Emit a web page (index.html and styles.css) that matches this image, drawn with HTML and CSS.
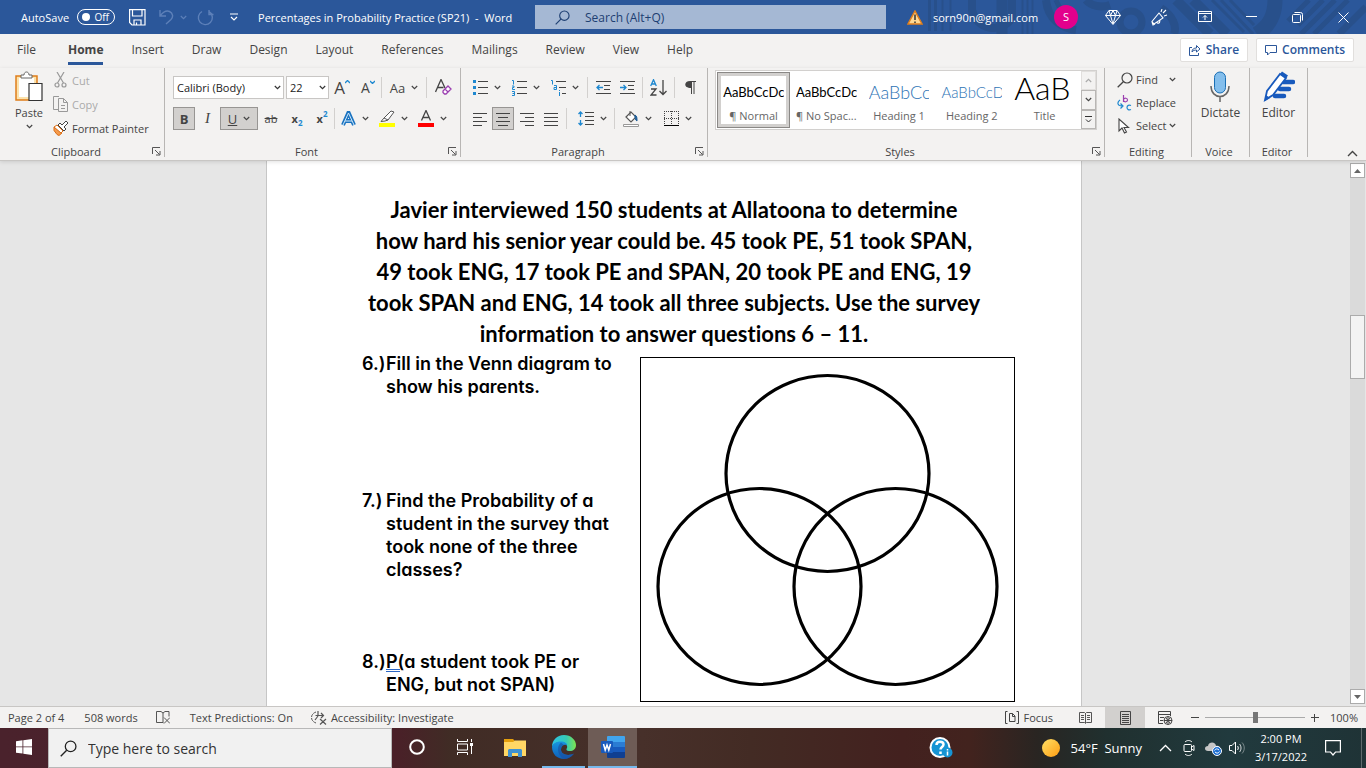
FILE: index.html
```html
<!DOCTYPE html>
<html lang="en">
<head>
    <meta charset="UTF-8">
    <meta name="viewport" content="width=device-width, initial-scale=1.0">
    <title>Percentages in Probability Practice (SP21) - Word</title>
    <link rel="stylesheet" href="styles.css">
</head>
<body>
    <!-- shared symbols -->
    <svg class="sprite" width="0" height="0">
        <symbol id="chev" viewBox="0 0 7 5"><path d="M.8 1l2.700 2.600L6.200 1" fill="none" stroke="currentColor" stroke-width="1.200"/></symbol>
        <symbol id="launch" viewBox="0 0 9 9"><path d="M.5 7V.500H8M3 3l4.500 4.500M8 4v4H4" fill="none" stroke="#555"/></symbol>
        <symbol id="lens" viewBox="0 0 16 16"><circle cx="10" cy="6" r="5" fill="none" stroke="currentColor" stroke-width="1.200"/><path d="M6.300 9.700L.7 15.300" fill="none" stroke="currentColor" stroke-width="1.300"/></symbol>
    </svg>

    <header class="titlebar">
        <svg class="pattern" width="480" height="34" viewBox="0 0 480 34" fill="none" stroke="#28508b">
            <path d="M43.500 0v31M49.500 0v31" stroke-width="3"/>
            <path d="M56.500 0v31M64.500 0v31" stroke-width="2"/>
            <path d="M86 0v10a22 22 0 0 0 40 8V0" stroke-width="8"/>
            <path d="M116 0v34" stroke-width="11"/>
            <path d="M136.500 0v34M141.500 0v34M146.500 0v34" stroke-width="2"/>
            <path d="M160 0c2 20 16 28 30 30" stroke-width="8"/>
            <path d="M170 0c3 9 8 13 15 15" stroke-width="5"/>
            <circle cx="245" cy="22" r="11" stroke-width="7"/>
            <path d="M200 0c5 6 15 8 24 5M275 8c12 8 16 18 13 26" stroke-width="8"/>
            <path d="M290 0l34 34M307 0l34 34" stroke-width="10"/>
            <path d="M326 0l32 32M335 0l32 34M344 0l24 25" stroke-width="3"/>
            <path d="M389 0c0 16-6 26-18 34" stroke-width="15"/>
            <path d="M402 21l21-21M412 25l25-25M415 34l34-34M428 34l34-34" stroke-width="5"/>
            <path d="M453 34l27-27" stroke-width="7"/>
        </svg>
        <div class="title-left">
            <label class="autosave">AutoSave <input type="checkbox" class="switch"><span class="switch-face"><i></i>Off</span></label>
            <button class="plain save" aria-label="Save"><svg width="17" height="17" viewBox="0 0 17 17" fill="none" stroke="#fff" stroke-width="1.200"><path d="M.6.600h15.400v15.400H3L.6 13.500zM3.500.600v6.400h9.500V.600M5 16v-5h7v5M7.500 16v-2.500"/></svg></button>
            <button class="plain undo" aria-label="Undo"><svg width="15" height="16" viewBox="0 0 15 16" fill="none" stroke="#5d80b9" stroke-width="1.400"><path d="M1 1v6h6M1.500 6.500C5 2 8 1.500 10.500 2.500 14 4 14.500 8 12 10.500L7 15"/></svg><svg class="chev faded"><use href="#chev"/></svg></button>
            <button class="plain redo" aria-label="Redo"><svg width="17" height="17" viewBox="0 0 17 17" fill="none" stroke="#5d80b9" stroke-width="1.400"><path d="M12 1v4.500h4.500M5 2.500a7 7 0 1 0 7.500.500l3 2.500"/></svg></button>
            <button class="plain" aria-label="Customize toolbar"><svg width="8" height="8" viewBox="0 0 8 8" fill="none" stroke="#fff" stroke-width="1.200"><path d="M0 1h8M1 4l3 3 3-3"/></svg></button>
            <span class="doc-title">Percentages in Probability Practice (SP21)&nbsp; -&nbsp; Word</span>
        </div>
        <label class="title-search"><svg width="15" height="15"><use href="#lens"/></svg><input type="text" placeholder="Search (Alt+Q)" aria-label="Search"></label>
        <div class="title-right">
            <svg width="16" height="15" viewBox="0 0 16 15"><path d="M8 1l7 13H1z" fill="#ffd994" stroke="#e07f1c" stroke-width="1.500"/><path d="M8 4.500v5.500M8 11.500v1.500" stroke="#333" stroke-width="1.500"/></svg>
            <span class="account">sorn90n@gmail.com</span>
            <span class="avatar">S</span>
            <button class="plain win gem" aria-label="Premium"><svg width="16" height="15" viewBox="0 0 16 15" fill="none" stroke="#fff"><path d="M4 .500h8l3.500 5L8 14.500.500 5.500zM.5 5.500h15M4 .500l1.500 5L8 14l2.500-8.500L12 .500M5.500 5.500L8 .500l2.500 5"/></svg></button>
            <button class="plain win" aria-label="What's new"><svg width="17" height="17" viewBox="0 0 17 17" fill="none" stroke="#fff" stroke-width="1.100"><path d="M8 4l4 5-9 6-2-2.500zM1 13l1 3 2-1M6 13c0 2 3 2 3-2M10 3l1-3M12 4l3-3M13 7l3-1"/></svg></button>
            <button class="plain win" aria-label="Ribbon display options"><svg width="14" height="12" viewBox="0 0 14 12" fill="none" stroke="#fff"><path d="M.5.500h13v10H.5zM.5 2.500h13M7 9V4.500M5 6.500l2-2 2 2"/></svg></button>
            <button class="plain win" aria-label="Minimize"><svg width="11" height="11" viewBox="0 0 11 11"><path d="M0 4.500h11" stroke="#fff"/></svg></button>
            <button class="plain win" aria-label="Restore"><svg width="11" height="11" viewBox="0 0 11 11" fill="none" stroke="#fff"><rect x=".5" y="2.500" width="8" height="8" rx="1"/><path d="M2.500.500h6a2 2 0 0 1 2 2v6"/></svg></button>
            <button class="plain win" aria-label="Close"><svg width="11" height="11" viewBox="0 0 11 11" stroke="#fff"><path d="M.5.500l10 10M10.500.500l-10 10"/></svg></button>
        </div>
    </header>

    <nav class="tabs">
        <a href="#" class="file">File</a>
        <a href="#" class="active">Home</a>
        <a href="#">Insert</a>
        <a href="#">Draw</a>
        <a href="#">Design</a>
        <a href="#">Layout</a>
        <a href="#">References</a>
        <a href="#">Mailings</a>
        <a href="#">Review</a>
        <a href="#">View</a>
        <a href="#">Help</a>
        <div class="tab-actions">
            <button class="action"><svg width="12" height="12" viewBox="0 0 12 12" fill="none" stroke="#2b579a"><path d="M3 3.500H.5v8h9V9M3 8c0-3 2-4 4.500-4V1.500L11 5 7.500 8V6C5.500 6 4 6.500 3 8z"/></svg>Share</button>
            <button class="action"><svg width="12" height="12" viewBox="0 0 12 12" fill="none" stroke="#2b579a"><path d="M.5 1.500h11v7H5l-2.500 2.500V8.500h-2z"/></svg>Comments</button>
        </div>
    </nav>

    <section class="ribbon">
        <div class="group clipboard">
            <div class="tools clip-tools">
                <button class="plain big"><svg width="28" height="31" viewBox="0 0 28 31"><path d="M1 5h21v24H1z" fill="#fbe3ad" stroke="#e07d1a" stroke-width="1.500"/><path d="M4 7h15v19H4z" fill="#fff"/><path d="M6 7V4h3c0-4 5-4 5 0h3v3z" fill="#fff" stroke="#666"/><path d="M14 12.500h13v17H14z" fill="#fff" stroke="#333" stroke-width="1.200"/></svg>Paste<svg class="chev"><use href="#chev"/></svg></button>
                <div class="stack">
                    <button class="plain item off"><svg width="16" height="16" viewBox="0 0 16 16" fill="none" stroke="#999" stroke-width="1.200"><path d="M4 0l6.500 11M11 0L4.500 11"/><circle cx="4" cy="13" r="2"/><circle cx="11" cy="13" r="2"/></svg>Cut</button>
                    <button class="plain item off"><svg width="16" height="16" viewBox="0 0 16 16" fill="none" stroke="#999"><path d="M5 13.500H.5V.500H6M5.500 2.500h5l4 4v9h-9zM10.500 2.500v4h4M8 9.500h4M8 12.500h4"/></svg>Copy</button>
                    <button class="plain item"><svg width="16" height="16" viewBox="0 0 16 16"><path d="M1 7l8 6-3 2.500-2-1-3-4z" fill="#f59b4c" stroke="#d96d16"/><path d="M1 7l3-2 6 6-2 2z" fill="#fff" stroke="#d96d16"/><path d="M5 5l2-2 2 2 4-4 2 2-4 4 2 2-2 2z" fill="#fff" stroke="#444"/></svg>Format Painter</button>
                </div>
            </div>
            <div class="caption"><span>Clipboard</span><svg class="launch"><use href="#launch"/></svg></div>
        </div>

        <div class="group font">
            <div class="tools rows">
                <div class="row">
                    <select class="family" aria-label="Font"><option>Calibri (Body)</option></select>
                    <select class="size" aria-label="Font size"><option>22</option></select>
                    <button class="plain w26" aria-label="Grow font"><span class="glyph g18">A</span><svg class="hint" width="5" height="4" viewBox="0 0 5 4"><path d="M0 3l2.500-2.500L5 3" fill="none" stroke="#1e88d0" stroke-width="1.300"/></svg></button>
                    <button class="plain w26" aria-label="Shrink font"><span class="glyph g14">A</span><svg class="hint" width="5" height="4" viewBox="0 0 5 4"><path d="M0 1l2.500 2.500L5 1" fill="none" stroke="#1e88d0" stroke-width="1.300"/></svg></button>
                    <span class="sep"></span>
                    <button class="plain w44" aria-label="Change case"><span class="glyph g13">Aa</span><svg class="chev"><use href="#chev"/></svg></button>
                    <span class="sep"></span>
                    <button class="plain w32" aria-label="Clear formatting"><svg width="17" height="17" viewBox="0 0 17 17" fill="none"><path d="M.5 13L6 .500 10 9M2.500 8.500h6" stroke="#444" stroke-width="1.300"/><path d="M8 12l5-5 3 3-5 5H9.500L8 13.500zM10 10l3 3" fill="#fff" stroke="#9b3fb0" stroke-width="1.300"/></svg></button>
                </div>
                <div class="row">
                    <button class="plain w22 pressed"><b class="g13">B</b></button>
                    <button class="plain w25"><i class="italic">I</i></button>
                    <button class="plain w38 pressed" aria-label="Underline"><u class="g13">U</u><svg class="chev"><use href="#chev"/></svg></button>
                    <button class="plain w26"><s>ab</s></button>
                    <button class="plain w26" aria-label="Subscript"><b>x</b><sub>2</sub></button>
                    <button class="plain w24" aria-label="Superscript"><b>x</b><sup>2</sup></button>
                    <span class="sep"></span>
                    <button class="plain w39" aria-label="Text effects"><svg width="15" height="16" viewBox="0 0 15 16" fill="none" stroke-linejoin="round"><path d="M2 14L7.500 1.500 13 14M4 10h7" stroke="#1a73c0" stroke-width="4"/><path d="M2 14L7.500 2 13 14M4 10h7" stroke="#cfe8fa" stroke-width="1"/></svg><svg class="chev"><use href="#chev"/></svg></button>
                    <button class="plain w39" aria-label="Highlight"><svg width="16" height="17" viewBox="0 0 16 17"><path d="M5 8l7-7 3 1-6 8-3 1-4 .500L5 8zM5 8l4 2" fill="#fff" stroke="#555"/><path d="M0 13h16v4H0z" fill="#ff0"/></svg><svg class="chev"><use href="#chev"/></svg></button>
                    <button class="plain w39" aria-label="Font color"><svg width="16" height="17" viewBox="0 0 16 17"><path d="M3.500 10.500L8 .500l4.500 10M5 7.500h6" fill="none" stroke="#444" stroke-width="1.300"/><path d="M0 13h16v4H0z" fill="#f00"/></svg><svg class="chev"><use href="#chev"/></svg></button>
                </div>
            </div>
            <div class="caption"><span>Font</span><svg class="launch"><use href="#launch"/></svg></div>
        </div>

        <div class="group paragraph">
            <div class="tools rows">
                <div class="row">
                    <button class="plain w39" aria-label="Bullets"><svg width="15" height="15" viewBox="0 0 15 15"><path d="M0 0h3v3H0zM0 6h3v3H0zM0 12h3v3H0z" fill="#1e88d0"/><path d="M5 1.500h10M5 7.500h10M5 13.500h10" stroke="#444"/></svg><svg class="chev"><use href="#chev"/></svg></button>
                    <button class="plain w39" aria-label="Numbering"><svg width="15" height="16" viewBox="0 0 15 16" fill="none"><path d="M0 .500h1.500v4M0 6h2v1.500H.5V9.500H3M0 11.500h2.500v4H0M.5 13.500h2" stroke="#1e88d0"/><path d="M5 1.500h10M5 7.500h10M5 13.500h10" stroke="#444"/></svg><svg class="chev"><use href="#chev"/></svg></button>
                    <button class="plain w39" aria-label="Multilevel list"><svg width="15" height="16" viewBox="0 0 15 16" fill="none"><path d="M0 .500h1.500v4M3 5.500h2.500v4H3V7.500h2.500M8.500 10v1M8.500 12v4" stroke="#1e88d0"/><path d="M5 1.500h10M8 7.500h7M11 13.500h4" stroke="#444"/></svg><svg class="chev"><use href="#chev"/></svg></button>
                    <span class="sep wide"></span>
                    <button class="plain w24" aria-label="Decrease indent"><svg width="15" height="14" viewBox="0 0 15 14" fill="none"><path d="M0 .500h15M8 4.500h6M8 8.500h6M0 12.500h15" stroke="#444"/><path d="M7 6.500H1M3.500 4L1 6.500 3.500 9" stroke="#1e88d0" stroke-width="1.300"/></svg></button>
                    <button class="plain w24" aria-label="Increase indent"><svg width="15" height="14" viewBox="0 0 15 14" fill="none"><path d="M0 .500h15M8 4.500h6M8 8.500h6M0 12.500h15" stroke="#444"/><path d="M0 6.500h6M3.500 4L6 6.500 3.500 9" stroke="#1e88d0" stroke-width="1.300"/></svg></button>
                    <span class="sep wide"></span>
                    <button class="plain w25" aria-label="Sort"><svg width="17" height="17" viewBox="0 0 17 17" fill="none" stroke-width="1.300"><path d="M.7 7L3.500.700 6.300 7M1.500 5h4" stroke="#1e88d0"/><path d="M1 10h5l-5 6h5.500M13 1v14.500M9.500 12l3.500 3.500 3.500-3.500" stroke="#444"/></svg></button>
                    <span class="sep wide"></span>
                    <button class="plain w25" aria-label="Show marks"><svg width="11" height="13" viewBox="0 0 11 13"><path d="M5 0h6v1H9.500v12h-1V1H7v12H6V7C-2 7-1 0 5 0z" fill="#444"/></svg></button>
                </div>
                <div class="row">
                    <button class="plain w25" aria-label="Align left"><svg width="14" height="14" viewBox="0 0 14 14"><path d="M0 1.500h14M0 5.500h9M0 9.500h14M0 13.500h9" stroke="#444"/></svg></button>
                    <button class="plain w22 pressed" aria-label="Center"><svg width="14" height="14" viewBox="0 0 14 14"><path d="M0 1.500h14M2 5.500h10M0 9.500h14M2 13.500h10" stroke="#444"/></svg></button>
                    <button class="plain w25" aria-label="Align right"><svg width="14" height="14" viewBox="0 0 14 14"><path d="M0 1.500h14M5 5.500h9M0 9.500h14M5 13.500h9" stroke="#444"/></svg></button>
                    <button class="plain w24" aria-label="Justify"><svg width="14" height="14" viewBox="0 0 14 14"><path d="M0 1.500h14M0 5.500h14M0 9.500h14M0 13.500h14" stroke="#444"/></svg></button>
                    <span class="sep wide"></span>
                    <button class="plain w44" aria-label="Line spacing"><svg width="16" height="15" viewBox="0 0 16 15" fill="none"><path d="M2.500 1v5M.5 3l2-2 2 2M2.500 9v5M.5 12l2 2 2-2" stroke="#1e88d0" stroke-width="1.300"/><path d="M7 1.500h9M7 5.500h9M7 9.500h9M7 13.500h9" stroke="#444"/></svg><svg class="chev"><use href="#chev"/></svg></button>
                    <span class="sep"></span>
                    <button class="plain w44" aria-label="Shading"><svg width="16" height="16" viewBox="0 0 16 16"><path d="M3 6l5-5 5 5-5 5z" fill="#fff" stroke="#555" stroke-width="1.200"/><path d="M7 0v5" stroke="#555"/><path d="M12 4c2 1 2 3 2 6-2-1-2-3-2-6z" fill="#1e5f9a" stroke="#1e5f9a"/><path d="M.5 13.500h15v2H.5z" fill="#fff" stroke="#999"/></svg><svg class="chev"><use href="#chev"/></svg></button>
                    <button class="plain w38" aria-label="Borders"><svg width="15" height="15" viewBox="0 0 15 15" stroke="#444"><path d="M0 .500h15M0 7.500h15M.5 0v14M7.500 0v14M14.500 0v14" stroke-dasharray="1 1"/><path d="M0 14.500h15" stroke="#000"/></svg><svg class="chev"><use href="#chev"/></svg></button>
                </div>
            </div>
            <div class="caption"><span>Paragraph</span><svg class="launch"><use href="#launch"/></svg></div>
        </div>

        <div class="group styles">
            <div class="tools">
                <div class="gallery">
                    <button class="style selected"><span class="sample">AaBbCcDc</span><span>¶ Normal</span></button>
                    <button class="style"><span class="sample">AaBbCcDc</span><span>¶ No Spac...</span></button>
                    <button class="style"><span class="sample h1-sample">AaBbCc</span><span>Heading 1</span></button>
                    <button class="style"><span class="sample h2-sample">AaBbCcD</span><span>Heading 2</span></button>
                    <button class="style"><span class="sample title-sample">AaB</span><span>Title</span></button>
                    <div class="gallery-nav">
                        <button class="dim" aria-label="Previous styles"><svg class="chev flip"><use href="#chev"/></svg></button>
                        <button aria-label="Next styles"><svg class="chev"><use href="#chev"/></svg></button>
                        <button aria-label="More styles"><svg width="7" height="7" viewBox="0 0 7 7" fill="none" stroke="#333"><path d="M0 .500h7M1 3.500L3.500 6 6 3.500"/></svg></button>
                    </div>
                </div>
            </div>
            <div class="caption"><span>Styles</span><svg class="launch"><use href="#launch"/></svg></div>
        </div>

        <div class="group editing">
            <div class="tools">
                <div class="stack">
                    <button class="plain item"><svg width="16" height="16"><use href="#lens"/></svg>Find<svg class="chev gap"><use href="#chev"/></svg></button>
                    <button class="plain item"><svg width="16" height="16" viewBox="0 0 16 16" fill="none" stroke-width="1.200"><path d="M6.500 0v7M6.500 4.500c1-2 4-1.500 4 .500s-3 2.500-4 .500" stroke="#9b3fb0"/><path d="M14 10.500c-2-1-4 0-4 2s2 3 4 2M3 5C0 7 0 11 5 11M3.500 8.500L6 11l-2.500 2.500" stroke="#1e88d0"/></svg>Replace</button>
                    <button class="plain item"><svg width="16" height="16" viewBox="0 0 16 16"><path d="M2 1v12l3-3 2.500 5 2-1L7 9.500h4.500z" fill="#fff" stroke="#444" stroke-width="1.100"/></svg>Select<svg class="chev"><use href="#chev"/></svg></button>
                </div>
            </div>
            <div class="caption"><span>Editing</span></div>
        </div>

        <div class="group single">
            <div class="tools">
                <button class="plain big"><svg width="20" height="31" viewBox="0 0 20 31" fill="none"><rect x="4.500" y="1" width="11" height="21" rx="5.500" fill="#83beec" stroke="#1a6fb5"/><path d="M1 15c0 14 18 14 18 0M10 25.500V31" stroke="#666" stroke-width="1.500"/></svg>Dictate</button>
            </div>
            <div class="caption"><span>Voice</span></div>
        </div>

        <div class="group single">
            <div class="tools">
                <button class="plain big"><svg width="32" height="31" viewBox="0 0 32 31"><path d="M20 11h10M17 18h9M12 25h9" stroke="#185abd" stroke-width="4.500" stroke-linecap="round"/><path d="M2 29l2-9L17 3l6 4-13 17z" fill="#fff" stroke="#185abd" stroke-width="1.800"/><path d="M17 3l2-2.500 6 4L22.500 8zM2 30l1-6 4 3z" fill="#185abd"/></svg>Editor</button>
            </div>
            <div class="caption"><span>Editor</span></div>
        </div>
        <button class="plain collapse" aria-label="Collapse the ribbon"><svg width="11" height="7" viewBox="0 0 11 7"><path d="M1 6l4.500-4.500L10 6" fill="none" stroke="#444" stroke-width="1.400"/></svg></button>
    </section>

    <main class="workspace">
        <div class="canvas">
            <article class="page">
                <h1>Javier interviewed 150 students at Allatoona to determine<br>how hard his senior year could be. 45 took PE, 51 took SPAN,<br>49 took ENG, 17 took PE and SPAN, 20 took PE and ENG, 19<br>took SPAN and ENG, 14 took all three subjects. Use the survey<br>information to answer questions 6 – 11.</h1>
                <div class="exercise">
                    <div class="questions">
                        <p class="q6"><span>6.)</span><span>Fill in the Venn diagram to<br>show his parents.</span></p>
                        <p class="q7"><span>7.)</span><span>Find the Probability of a<br>student in the survey that<br>took none of the three<br>classes?</span></p>
                        <p><span>8.)</span><span><span class="grammar">P(</span>a student took PE or<br>ENG, but not SPAN)</span></p>
                    </div>
                    <svg class="venn" width="375" height="345" viewBox="0 0 375 345" fill="none" stroke="#000">
                        <rect x=".5" y=".5" width="374" height="344"/>
                        <g stroke-width="3.200">
                            <ellipse cx="187.500" cy="116.500" rx="101.500" ry="98"/>
                            <ellipse cx="119.500" cy="229.500" rx="101.500" ry="98"/>
                            <ellipse cx="255.500" cy="229.500" rx="101.500" ry="98"/>
                        </g>
                    </svg>
                </div>
            </article>
        </div>
        <div class="scrollbar">
            <button aria-label="Scroll up"><svg width="7" height="4" viewBox="0 0 7 4"><path d="M0 4L3.500 0 7 4z" fill="#666"/></svg></button>
            <div class="track"><div class="thumb"></div></div>
            <button aria-label="Scroll down"><svg width="7" height="4" viewBox="0 0 7 4"><path d="M0 0l3.500 4L7 0z" fill="#666"/></svg></button>
        </div>
    </main>

    <div class="statusbar">
        <span class="pages">Page 2 of 4</span>
        <span class="words">508 words</span>
        <svg class="proof" width="14" height="13" viewBox="0 0 14 13" fill="none" stroke="#555"><path d="M7 11.500H.5V.500H5l2 1.500v10M7 2L9 .500h4v5M8 6.500l6 6M14 6.500l-6 6"/></svg>
        <span class="predictions">Text Predictions: On</span>
        <svg width="16" height="14" viewBox="0 0 16 14" fill="none" stroke="#555"><path d="M5 1C-1 3-1 10 5 12" stroke-dasharray="3 1"/><path d="M7 0v5M4.500 4.500H12M10 2l2.500 2.500L10 7M9 8l6 5.500M15 8l-6 5.500M7 5l-3 4" stroke-width="1.200"/></svg>
        <span class="access">Accessibility: Investigate</span>
        <div class="views">
            <button class="plain focus"><svg width="14" height="13" viewBox="0 0 14 13" fill="none" stroke="#444"><path d="M2.500.500h-2v12h2M11.500.500h2v12h-2M4.500 2.500h3l2.500 2.500v5.500H4.500zM7.500 2.500v3H10"/></svg>Focus</button>
            <button class="plain view" aria-label="Read mode"><svg width="13" height="12" viewBox="0 0 13 12" fill="none" stroke="#555"><path d="M.5.500h5l1 1 1-1h5v10h-5l-1 1-1-1h-5zM6.500 1v10M2 3.500h3M2 5.500h3M2 7.500h3M8 3.500h3M8 5.500h3M8 7.500h3"/></svg></button>
            <button class="plain view on" aria-label="Print layout"><svg width="11" height="14" viewBox="0 0 11 14" fill="none" stroke="#444"><path d="M.5.500h10v13H.5zM2 3.500h7M2 5.500h7M2 7.500h7M2 9.500h7M2 11.500h7"/></svg></button>
            <button class="plain view" aria-label="Web layout"><svg width="15" height="14" viewBox="0 0 15 14" fill="none" stroke="#444"><path d="M5 12.500H.5V.500h12V5M.5 3.500h12M2 6.500h4M2 9.500h3"/><circle cx="10" cy="9.500" r="4"/><path d="M6 9.500h8M10 5.500v8M8 7l4 5M12 7l-4 5"/></svg></button>
            <button class="plain zoom-step" aria-label="Zoom out"><svg width="8" height="8" viewBox="0 0 8 8"><path d="M0 3.500h8" stroke="#444"/></svg></button>
            <input type="range" class="zoom" min="0" max="100" value="50" aria-label="Zoom">
            <button class="plain zoom-step" aria-label="Zoom in"><svg width="8" height="8" viewBox="0 0 8 8"><path d="M0 3.500h8M3.500 0v8" stroke="#444"/></svg></button>
            <span class="percent">100%</span>
        </div>
    </div>

    <footer class="taskbar">
        <button class="plain task" aria-label="Start"><svg width="16" height="16" viewBox="0 0 16 16" fill="#fff"><path d="M0 2.200l6.500-.9v6.200H0zM7.300 1.200L16 0v7.500H7.300zM0 8.300h6.500v6.200L0 13.700zM7.300 8.300H16V16l-8.700-1.200z"/></svg></button>
        <label class="task-search"><svg width="17" height="17"><use href="#lens"/></svg><input type="text" placeholder="Type here to search" aria-label="Type here to search"></label>
        <button class="plain task" aria-label="Cortana"><svg width="16" height="16" viewBox="0 0 16 16"><circle cx="8" cy="8" r="6.800" fill="none" stroke="#fff" stroke-width="2"/></svg></button>
        <button class="plain task" aria-label="Task view"><svg width="17" height="16" viewBox="0 0 17 16" fill="none" stroke="#fff"><path d="M.5 0v2.500h10V0M.5 16v-2.500h10V16M.5 5h10v6H.5zM14.500 0v3M14.500 7v8"/><path d="M13 4h3v3h-3z" fill="#fff" stroke="none"/></svg></button>
        <button class="plain task" aria-label="File Explorer"><svg width="22" height="19" viewBox="0 0 22 19"><path d="M0 1h9l2 2h11v15H0z" fill="#e5a00d"/><path d="M0 4h9l2-1.500h11V18H0z" fill="#ffd765"/><path d="M4 19v-7l1-1h12l1 1v7h-4v-4H8v4z" fill="#3f92d2"/></svg></button>
        <button class="plain task running" aria-label="Edge"><svg width="24" height="24" viewBox="0 0 24 24">
            <defs>
                <linearGradient id="edgeTop"><stop offset="0" stop-color="#2cc3e6"/><stop offset=".6" stop-color="#36c9b4"/><stop offset="1" stop-color="#7de54f"/></linearGradient>
                <linearGradient id="edgeLow" x2="0" y2="1"><stop offset="0" stop-color="#1795e0"/><stop offset="1" stop-color="#0f5fb8"/></linearGradient>
            </defs>
            <path d="M0 12C0 5 5 0 12 0s12 5 12 10c0 4-3 6-6 6-4 0-4-1.500-3-3 1-3-2-6-6-6-4 0-8 2-9 5z" fill="url(#edgeTop)"/>
            <path d="M0 12c1-4 5-5.500 9-5.500 4 0 6 2 6 4-2-2-6 0-6 4 0 5 7 7 13 4-3 4-7 5.500-10 5.500C5 24 0 19 0 12z" fill="url(#edgeLow)"/>
            <path d="M9 7.500c-4 3-5 12 3 16.500 4 0 8-2 10-5.500-6 3-13 1-13-4 0-3 2-4 3-4.500z" fill="#1a4f9f" opacity=".6"/></svg></button>
        <button class="plain task running current" aria-label="Word"><svg width="24" height="22" viewBox="0 0 24 22"><path d="M6 1a1 1 0 0 1 1-1h16a1 1 0 0 1 1 1v5H6z" fill="#41a5ee"/><path d="M6 6h18v5H6z" fill="#2b7cd3"/><path d="M6 11h18v5H6z" fill="#185abd"/><path d="M6 16h18v5a1 1 0 0 1-1 1H7a1 1 0 0 1-1-1z" fill="#103f91"/><rect y="5" width="12" height="12" rx="1" fill="#185abd"/><path d="M2.500 8l1.700 6L6 9l1.800 5 1.700-6" fill="none" stroke="#fff" stroke-width="1.500"/></svg></button>
        <div class="tray">
            <button class="plain help" aria-label="Help"><svg width="24" height="22" viewBox="0 0 24 22"><circle cx="11" cy="10.500" r="9.500" fill="#1694d4" stroke="#fff" stroke-width="2"/><path d="M7.500 8c0-4.500 7-4 7-.500 0 2.500-3 2.500-3 5M11.500 14.500v2.500" fill="none" stroke="#fff" stroke-width="2.500"/><circle cx="18.500" cy="15.500" r="5" fill="#1694d4"/><path d="M18.500 12v1.500M18.500 14.500v4" stroke="#fff" stroke-width="1.500"/></svg></button>
            <button class="plain weather"><span class="sun"></span>54°F&nbsp; Sunny</button>
            <button class="plain tray-icon" aria-label="Hidden icons"><svg width="13" height="8" viewBox="0 0 13 8"><path d="M1 7l5.500-5.500L12 7" fill="none" stroke="#fff" stroke-width="1.300"/></svg></button>
            <button class="plain tray-icon" aria-label="Meet now"><svg width="12" height="16" viewBox="0 0 12 16" fill="none" stroke="#fff"><path d="M2 2c2-2 5-2 7 0M2 14c2 2 5 2 7 0"/><rect x="1" y="4.500" width="7.500" height="7" rx="1"/><path d="M8.500 7l2.500-1.500v5L8.500 9"/></svg></button>
            <button class="plain tray-icon" aria-label="OneDrive"><svg width="17" height="15" viewBox="0 0 17 15"><path d="M3 10C-1 10-1 5 3 5c1-5 8-4 8 0 3-1 5 2 4 5z" fill="#c6c6c6"/><circle cx="12" cy="10" r="4.500" fill="#1e6fd0" stroke="#fff"/><path d="M9.500 9.500c1-2 3-2 4.500-.5M14.500 10.500c-1 2-3 2-4.500.500" stroke="#fff" fill="none"/></svg></button>
            <button class="plain tray-icon" aria-label="Volume"><svg width="16" height="14" viewBox="0 0 16 14" fill="none" stroke="#fff"><path d="M.5 4.500H3L6.500 1v12L3 9.500H.5zM8.500 5c1 1 1 3 0 4"/><path d="M10.500 3c2 2 2 6 0 8" opacity=".8"/><path d="M13 1.500c3 3 3 8 0 11" opacity=".4"/></svg></button>
            <div class="clock"><span>2:00 PM</span><span>3/17/2022</span></div>
            <button class="plain notify" aria-label="Notifications"><svg width="16" height="16" viewBox="0 0 16 16" fill="none" stroke="#fff" stroke-width="1.200"><path d="M.6.600h14.800v11.400H10.500L8 15l-2.500-3H.6z"/></svg></button>
        </div>
    </footer>
</body>
</html>
```
FILE: styles.css
```css
* {
    box-sizing: border-box;
}

body {
    margin: 0;
    height: 100vh;
    display: flex;
    flex-direction: column;
    overflow: hidden;
    font-family: "Open Sans", "Noto Sans", sans-serif;
    font-size: 11px;
    color: #444;
    background-color: #f3f2f1;
}

button, input, select {
    font: inherit;
    color: inherit;
}

svg {
    flex: none;
}

.sprite {
    position: absolute;
}

.plain {
    border: none;
    background: none;
    padding: 0;
    display: flex;
    align-items: center;
    justify-content: center;
}

.chev {
    width: 7px;
    height: 5px;
}

.flip {
    transform: rotate(180deg);
}

/* title bar */
.titlebar {
    flex: none;
    position: relative;
    height: 34px;
    display: grid;
    grid-template-columns: 535px minmax(0, 1fr) 480px;
    align-items: center;
    background-color: #2b579a;
    color: #fff;
}

.pattern {
    position: absolute;
    right: 0;
    top: 0;
}

.title-left {
    display: flex;
    align-items: center;
    padding-left: 21px;
}

.autosave {
    display: flex;
    align-items: center;
    gap: 8px;
}

.switch {
    position: absolute;
    opacity: 0;
}

.switch-face {
    width: 38px;
    height: 16px;
    border: 1px solid #fff;
    border-radius: 8px;
    display: flex;
    align-items: center;
    justify-content: space-between;
    padding: 0 5px 0 4px;
    font-size: 10px;
}

.switch-face i {
    width: 8px;
    height: 8px;
    border-radius: 50%;
    background-color: #fff;
}

.save {
    margin-left: 14px;
}

.undo {
    margin-left: 13px;
    gap: 6px;
}

.faded {
    color: #5d80b9;
}

.redo {
    margin: 0 16px 0 10px;
}

.doc-title {
    margin-left: 20px;
    white-space: nowrap;
}

.title-search {
    height: 24px;
    display: flex;
    align-items: center;
    gap: 15px;
    padding-left: 20px;
    background-color: #a5b8d4;
    color: #1e3f72;
    font-size: 12px;
}

.title-search input,
.task-search input {
    flex: 1;
    min-width: 0;
    border: none;
    padding: 0;
    background: none;
    outline: none;
}

.title-search input::placeholder {
    color: #1e3f72;
}

.title-right {
    position: relative;
    display: flex;
    align-items: center;
    padding-left: 21px;
}

.account {
    margin-left: 10px;
    width: 110px;
}

.avatar {
    width: 24px;
    height: 24px;
    margin-left: 11px;
    border-radius: 50%;
    background-color: #e3008c;
    line-height: 24px;
    text-align: center;
}

.win {
    width: 46px;
    height: 34px;
}

.gem {
    margin-left: auto;
}

/* tabs */
.tabs {
    flex: none;
    height: 34px;
    display: flex;
    align-items: center;
    padding: 0 12px 0 17px;
    gap: 28px;
    font-size: 12px;
}

.tabs a {
    color: #444;
    text-decoration: none;
    line-height: 24px;
    border-bottom: 3px solid transparent;
}

.tabs .file {
    margin-right: 4px;
}

.tabs .active {
    font-weight: bold;
    border-color: #2b579a;
}

.tab-actions {
    margin-left: auto;
    margin-bottom: 3px;
    display: flex;
    gap: 8px;
}

.action {
    height: 24px;
    display: flex;
    align-items: center;
    gap: 5px;
    padding: 0 8px;
    background-color: #fff;
    border: 1px solid #e1dfdd;
    border-radius: 2px;
    color: #2b579a;
    font-weight: 600;
}

/* ribbon */
.ribbon {
    flex: none;
    position: relative;
    height: 93px;
    display: flex;
    border-bottom: 1px solid #c8c6c4;
    box-shadow: 0 1px 4px rgba(0, 0, 0, 0.12);
}

.group {
    flex: none;
    display: flex;
    flex-direction: column;
    border: 0 solid;
    border-right-width: 1px;
    border-image: linear-gradient(#b8b6b4 88px, transparent 88px) 1;
}

.clipboard { width: 165px; }
.font { width: 296px; }
.paragraph { width: 247px; }
.styles { flex: 1; min-width: 0; }
.editing { width: 87px; }
.single { width: 58px; }

.tools {
    flex: 1;
    display: flex;
    justify-content: center;
}

.caption {
    display: flex;
    align-items: center;
    height: 17px;
    padding-right: 3px;
}

.caption span {
    flex: 1;
    text-align: center;
}

.launch {
    width: 9px;
    height: 9px;
}

.clip-tools {
    justify-content: flex-start;
    padding-left: 10px;
    gap: 5px;
}

.big {
    flex-direction: column;
    justify-content: flex-start;
    gap: 3px;
    padding-top: 3px;
    min-width: 38px;
    font-size: 12px;
    line-height: 16px;
}

.clip-tools .big {
    font-size: 11px;
}

.stack {
    display: flex;
    flex-direction: column;
}

.item {
    justify-content: flex-start;
    gap: 3px;
    height: 24px;
}

.off {
    color: #aaa;
}

.gap {
    margin-left: 8px;
}

.rows {
    flex-direction: column;
    justify-content: flex-start;
    gap: 8px;
    padding: 8px 0 0 8px;
}

.paragraph .rows {
    padding-left: 6px;
}

.row {
    height: 23px;
    display: flex;
    align-items: center;
}

.row button {
    height: 23px;
}

.w22 { width: 22px; }
.w24 { width: 24px; }
.w25 { width: 25px; }
.w26 { width: 26px; }
.w32 { width: 32px; }

.w38,
.w39,
.w44 {
    gap: 6px;
}

.w38 { width: 38px; }
.w39 { width: 39px; }
.w44 { width: 44px; }

.pressed {
    background-color: #d2d0ce;
    border: 1px solid #979593;
}

.sep {
    width: 1px;
    height: 21px;
    background-color: #d2d0ce;
}

.wide {
    margin: 0 3px;
}

.row select {
    appearance: none;
    height: 23px;
    padding: 0 3px;
    border: 1px solid #c8c6c4;
    border-radius: 0;
    color: #222;
    background: #fff url("data:image/svg+xml,%3Csvg xmlns='http://www.w3.org/2000/svg' width='7' height='5'%3E%3Cpath d='M.8 1l2.700 2.600L6.200 1' fill='none' stroke='%23333' stroke-width='1.200'/%3E%3C/svg%3E") no-repeat right 2px center;
}

.family {
    width: 111px;
    margin-right: 2px;
}

.size {
    width: 43px;
}

.g18 { font-size: 17px; }
.g14 { font-size: 14px; }
.g13 { font-size: 13px; }

.hint {
    align-self: flex-start;
    margin-top: 4px;
}

.italic {
    font-family: "Liberation Serif", serif;
    font-size: 15px;
}

.row sub,
.row sup {
    font-size: 8px;
    font-weight: bold;
    line-height: 8px;
    color: #1e88d0;
}

.row sub {
    align-self: flex-end;
    margin-bottom: 3px;
}

.row sup {
    align-self: flex-start;
    margin-top: 3px;
}

/* style gallery */
.styles .tools {
    align-items: flex-start;
    padding: 2px 9px 0;
}

.gallery {
    flex: 1;
    height: 60px;
    display: flex;
    background-color: #fff;
    border: 1px solid #d2d0ce;
    padding-left: 1px;
}

.style {
    flex: 1 1 0;
    min-width: 0;
    display: flex;
    flex-direction: column;
    justify-content: flex-end;
    align-items: center;
    padding: 0 5px 3px;
    margin: 1px 0;
    border: 1px solid transparent;
    background: none;
    white-space: nowrap;
    color: #666;
    line-height: 16px;
}

.selected {
    border-color: #8a8886;
    box-shadow: inset 0 0 0 3px #d2d0ce;
}

.sample {
    width: 100%;
    height: 32px;
    overflow: hidden;
    font-family: Lato, sans-serif;
    font-size: 13px;
    line-height: 32px;
    text-align: left;
    color: #000;
}

.h1-sample {
    font-size: 18px;
    font-weight: 300;
    color: #2e74b5;
}

.h2-sample {
    font-size: 15px;
    font-weight: 300;
    color: #2e74b5;
}

.title-sample {
    font-size: 32px;
    font-weight: 300;
    line-height: 24px;
}

.gallery-nav {
    width: 15px;
    display: flex;
    flex-direction: column;
}

.gallery-nav button {
    flex: 1;
    display: flex;
    align-items: center;
    justify-content: center;
    padding: 0;
    border: 1px solid #b8b6b4;
    background-color: #f3f2f1;
}

.gallery-nav .dim {
    color: #aaa;
    border-color: #e1dfdd;
}

.editing .tools {
    justify-content: flex-start;
    padding-left: 12px;
}

.editing .item {
    height: 23px;
}

.collapse {
    width: 58px;
    align-items: flex-end;
    justify-content: flex-end;
    padding: 0 8px 3px 0;
}

/* document */
.workspace {
    flex: 1;
    min-height: 0;
    display: flex;
    background-color: #e6e6e6;
}

.canvas {
    flex: 1;
    overflow: hidden;
    padding-right: 2px;
}

.page {
    width: 816px;
    min-height: 100%;
    margin: 0 auto;
    padding: 33px 95px 0;
    background-color: #fff;
    border: solid #c6c6c6;
    border-width: 0 1px;
    color: #000;
}

.page h1 {
    margin: 0;
    font-family: Lato, sans-serif;
    font-size: 22px;
    font-variant-ligatures: none;
    line-height: 31px;
    font-weight: bold;
    text-align: center;
    white-space: nowrap;
}

.exercise {
    display: flex;
    justify-content: space-between;
    align-items: flex-start;
    margin-right: -29px;
    padding-top: 3px;
}

.questions {
    font-family: Inter, sans-serif;
    font-feature-settings: "cv11";
    font-size: 18px;
    font-weight: 600;
    line-height: 23px;
    white-space: nowrap;
}

.questions p {
    display: grid;
    grid-template-columns: 24px auto;
    margin: 0;
}

.questions .q6 {
    margin-bottom: 91px;
}

.questions .q7 {
    margin-bottom: 69px;
}

.grammar {
    text-decoration: underline double #2b66c4 1px;
}

.venn {
    margin-top: 5px;
}

.scrollbar {
    width: 16px;
    display: flex;
    flex-direction: column;
    padding: 2px 1px 2px 0;
}

.scrollbar button {
    height: 15px;
    padding: 0;
    display: flex;
    align-items: center;
    justify-content: center;
    background-color: #fff;
    border: 1px solid #ababab;
}

.track {
    flex: 1;
    background-color: #dadada;
    padding-top: 137px;
}

.thumb {
    height: 64px;
    background-color: #f3f3f3;
    border: 1px solid #ababab;
}

/* status bar */
.statusbar {
    flex: none;
    height: 22px;
    display: flex;
    align-items: center;
    padding: 0 8px;
    border-top: 1px solid #c8c6c4;
    white-space: nowrap;
}

.words {
    margin-left: 20px;
}

.proof {
    margin: 0 20px 0 18px;
}

.predictions {
    margin-right: 18px;
}

.access {
    margin-left: 4px;
}

.views {
    margin-left: auto;
    display: flex;
    align-items: center;
}

.focus {
    gap: 4px;
    margin-right: 12px;
}

.view {
    width: 40px;
    height: 21px;
}

.on {
    background-color: #d2d0ce;
}

.zoom-step {
    width: 20px;
}

.zoom {
    appearance: none;
    width: 100px;
    height: 12px;
    margin: 0;
    background: linear-gradient(#aaa, #aaa) no-repeat center / 100% 1px;
}

.zoom::-webkit-slider-thumb {
    appearance: none;
    width: 5px;
    height: 11px;
    background-color: #767676;
}

.percent {
    margin-left: 5px;
}

/* taskbar */
.taskbar {
    flex: none;
    height: 40px;
    display: flex;
    background: linear-gradient(90deg, #4a222c 0, #4a2028 29%, #402c25 33%, #47302a 47%, #432b24 55%, #43211f 66%, #42231e 71%, #292522 76%, #20302f 81%, #213a3e 90%, #1f3336 100%);
    color: #fff;
}

.task {
    width: 49px;
    border-bottom: 2px solid transparent;
}

.task:first-child {
    width: 48px;
}

.running {
    border-image: linear-gradient(90deg, transparent 9%, #76b9ed 9%, #76b9ed 91%, transparent 91%) 2;
}

.current {
    border-image: none;
    border-color: #76b9ed;
    background-color: #6e5c56;
}

.task-search {
    width: 344px;
    display: flex;
    align-items: center;
    gap: 11px;
    padding-left: 11px;
    background-color: #f1f1f1;
    border: 1px solid #b8b8b8;
    color: #222;
    font-size: 14px;
}

.task-search input::placeholder {
    color: #333;
}

.tray {
    margin-left: auto;
    margin-right: 4px;
    display: flex;
    align-items: center;
    border-right: 1px solid #5d6b6d;
}

.help {
    margin-right: 89px;
}

.weather {
    gap: 11px;
    font-size: 13px;
    margin-right: 11px;
    white-space: nowrap;
}

.sun {
    width: 18px;
    height: 18px;
    border-radius: 50%;
    background: linear-gradient(135deg, #ffe066, #ff9d12);
}

.tray-icon {
    width: 24px;
    height: 40px;
}

.clock {
    width: 64px;
    display: flex;
    flex-direction: column;
    align-items: center;
    line-height: 18px;
}

.notify {
    width: 40px;
    height: 40px;
    margin-right: 8px;
}
```
